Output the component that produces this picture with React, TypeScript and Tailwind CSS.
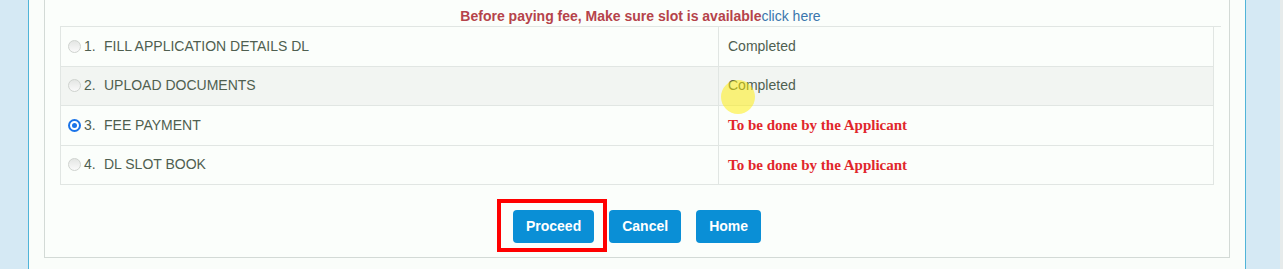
import React from 'react';

type Step = { no: number; label: string; status: string; done: boolean; checked?: boolean };

const steps: Step[] = [
  { no: 1, label: 'FILL APPLICATION DETAILS DL', status: 'Completed', done: true },
  { no: 2, label: 'UPLOAD DOCUMENTS', status: 'Completed', done: true },
  { no: 3, label: 'FEE PAYMENT', status: 'To be done by the Applicant', done: false, checked: true },
  { no: 4, label: 'DL SLOT BOOK', status: 'To be done by the Applicant', done: false },
];

const Radio = ({ checked }: { checked?: boolean }) =>
  checked ? (
    <span className="flex h-[13px] w-[13px] items-center justify-center rounded-full bg-[#1a73e8]">
      <span className="h-[9px] w-[9px] rounded-full border-2 border-white bg-[#1a73e8]" />
    </span>
  ) : (
    <span className="h-[13px] w-[13px] rounded-full border border-[#cfd3cf] bg-gradient-to-b from-[#e4e6e4] to-[#fafafa]" />
  );

export default function App() {
  return (
    <div className="flex h-[269px] w-[1283px] overflow-hidden bg-[#d5e9f4] font-['Liberation_Sans',Arial,sans-serif]">
      <div className="w-[28px] shrink-0" />
      <div className="w-[1218px] shrink-0 border-x border-[#50b4d8] bg-[#fafdfa] px-[15px]">
        <div className="relative h-[258px] border-x border-b border-[#d3dad6] bg-[#fbfefb] px-[15px]">
          <div className="mr-[-7px] h-[27px] border-b border-[#e1e6e3] pt-[6px] text-center text-[14px] leading-[20px]">
            <span className="font-bold text-[#b5434a]">Before paying fee, Make sure slot is available</span>
            <a className="text-[#3a76ad]">click here</a>
          </div>
          <div className="border-x border-[#e1e6e3]">
            {steps.map((s, i) => (
              <div
                key={s.no}
                className={`flex h-[39.5px] border-b border-[#e1e6e3] ${i === 1 ? 'bg-[#f2f5f2]' : ''}`}
              >
                <div className="flex w-[657px] shrink-0 items-center pl-[7px] text-[14px] text-[#4f5f50]">
                  <Radio checked={s.checked} />
                  <span className="ml-[3px] w-[20px]">{s.no}.</span>
                  <span>{s.label}</span>
                </div>
                <div className="flex flex-1 items-center border-l border-[#e1e6e3] pl-[9px]">
                  {s.done ? (
                    <span className="text-[14px] text-[#4f5f50]">{s.status}</span>
                  ) : (
                    <span className="font-['Liberation_Serif',serif] text-[15px] font-bold text-[#e1262b]">{s.status}</span>
                  )}
                </div>
              </div>
            ))}
          </div>
          <div className="mt-[25px] flex justify-center gap-[15px]">
            <div className="relative">
              <button className="h-[33px] rounded-[4px] bg-[#0a8fd6] px-[13px] text-[14px] font-bold text-white">Proceed</button>
              <span className="pointer-events-none absolute -left-[16px] -top-[11px] h-[53px] w-[110px] border-4 border-[#ff0000]" />
            </div>
            <button className="h-[33px] rounded-[4px] bg-[#0a8fd6] px-[13px] text-[14px] font-bold text-white">Cancel</button>
            <button className="h-[33px] rounded-[4px] bg-[#0a8fd6] px-[13px] text-[14px] font-bold text-white">Home</button>
          </div>
          <span className="pointer-events-none absolute left-[676px] top-[80px] h-[34px] w-[34px] rounded-full bg-[#ffee00]/50" />
        </div>
      </div>
      <div className="flex-1" />
      <div className="w-[3px] shrink-0 bg-[#e6ebeb]" />
    </div>
  );
}
